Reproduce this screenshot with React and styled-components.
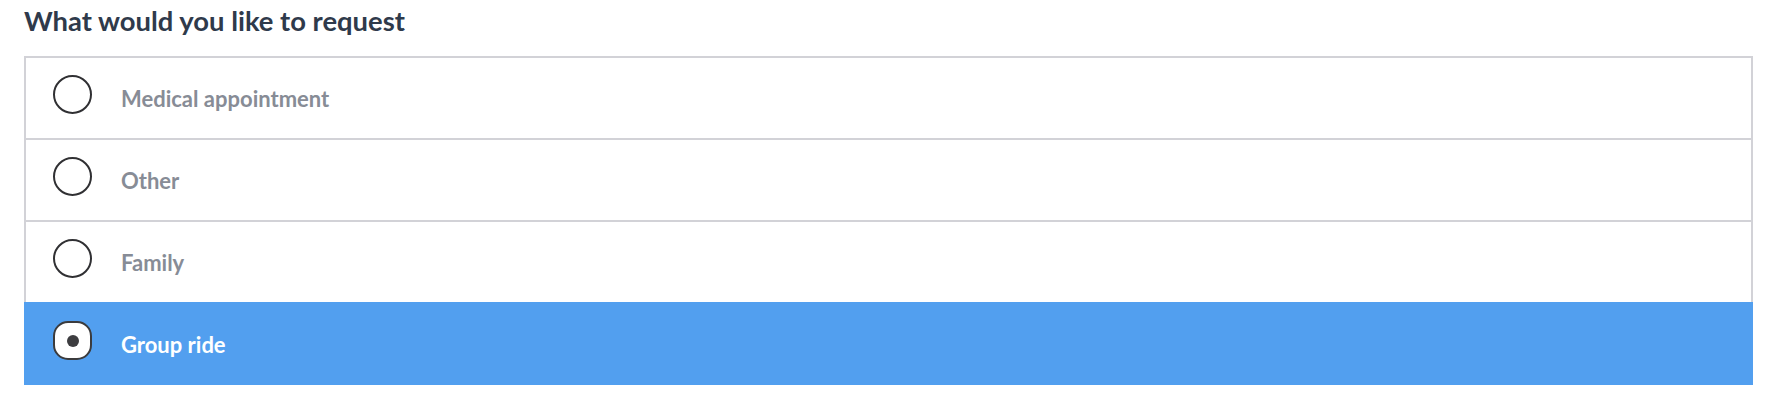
import styled, { createGlobalStyle } from "styled-components";

const options = [
  { label: "Medical appointment", selected: false },
  { label: "Other", selected: false },
  { label: "Family", selected: false },
  { label: "Group ride", selected: true },
];

const App = () => {
  return (
    <Page>
      <GlobalStyle />
      <Title>What would you like to request</Title>
      <List>
        {options.map((item, i) => (
          <Row key={i} $selected={item.selected}>
            <Radio $selected={item.selected}>{item.selected && <Dot />}</Radio>
            <Label $selected={item.selected}>{item.label}</Label>
          </Row>
        ))}
      </List>
    </Page>
  );
};

export default App;

const GlobalStyle = createGlobalStyle`
  body {
    margin: 0;
    background: #ffffff;
    font-family: Lato, "Liberation Sans", sans-serif;
  }
`;

const Page = styled.div`
  display: flex;
  flex-direction: column;
  padding: 0 23px 0 24px;
`;

const Title = styled.h2`
  margin: 0;
  padding-top: 6px;
  height: 56px;
  box-sizing: border-box;
  font-size: 27.4px;
  line-height: 30px;
  font-weight: 700;
  color: #2f3a4b;
`;

const List = styled.div`
  display: flex;
  flex-direction: column;
`;

const Row = styled.div`
  display: flex;
  align-items: center;
  height: ${(p) => (p.$selected ? "85px" : "84px")};
  box-sizing: border-box;
  margin-bottom: -2px;
  padding-left: 27px;
  border: 2px solid ${(p) => (p.$selected ? "#529fef" : "#d2d2d7")};
  background: ${(p) => (p.$selected ? "#529fef" : "#ffffff")};
`;

const Radio = styled.div`
  display: flex;
  align-items: center;
  justify-content: center;
  width: 39px;
  height: 39px;
  box-sizing: border-box;
  margin-bottom: 8px;
  border: 2px solid ${(p) => (p.$selected ? "#3b3b3d" : "#303033")};
  border-radius: ${(p) => (p.$selected ? "15px" : "50%")};
  background: #ffffff;
  flex-shrink: 0;
`;

const Dot = styled.span`
  width: 12px;
  height: 12px;
  border-radius: 50%;
  background: #3d3d40;
`;

const Label = styled.span`
  margin-left: 29px;
  font-size: 22px;
  font-weight: 700;
  color: ${(p) => (p.$selected ? "#ffffff" : "#878c96")};
`;
